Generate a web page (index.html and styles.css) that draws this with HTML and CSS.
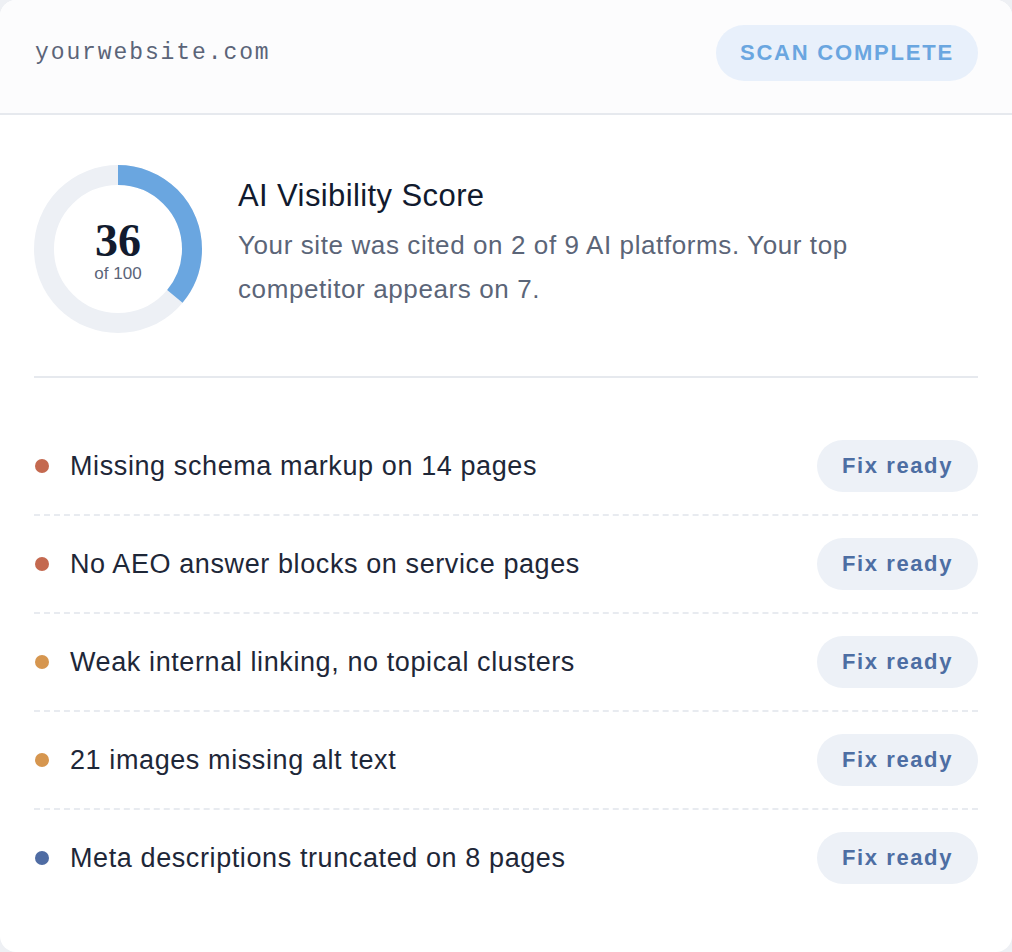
FILE: index.html
```html
<!DOCTYPE html>
<html lang="en">
<head>
  <meta charset="UTF-8">
  <meta name="viewport" content="width=device-width, initial-scale=1.0">
  <title>AI Visibility Scan</title>
  <link rel="stylesheet" href="styles.css">
</head>
<body>
<div class="card">
  <div class="card-header">
    <span class="domain">yourwebsite.com</span>
    <span class="status">Scan complete</span>
  </div>

  <div class="card-body">
    <div class="score">
      <div class="donut">
        <svg width="168" height="168" viewBox="0 0 168 168">
          <circle cx="84" cy="84" r="74" fill="none" stroke="#edf0f5" stroke-width="20"/>
          <circle cx="84" cy="84" r="74" fill="none" stroke="#6aa6e0" stroke-width="20"
            stroke-dasharray="167.4 464.96" transform="rotate(-90 84 84)"/>
        </svg>
        <div class="donut-label">
          <span class="donut-value">36</span>
          <span class="donut-total">of 100</span>
        </div>
      </div>
      <div class="score-text">
        <h2>AI Visibility Score</h2>
        <p>Your site was cited on 2 of 9 AI platforms. Your top competitor appears on 7.</p>
      </div>
    </div>

    <ul class="issues">
      <li class="issue">
        <span class="dot high"></span>
        <span class="issue-text">Missing schema markup on 14 pages</span>
        <span class="fix">Fix ready</span>
      </li>
      <li class="issue">
        <span class="dot high"></span>
        <span class="issue-text">No AEO answer blocks on service pages</span>
        <span class="fix">Fix ready</span>
      </li>
      <li class="issue">
        <span class="dot medium"></span>
        <span class="issue-text">Weak internal linking, no topical clusters</span>
        <span class="fix">Fix ready</span>
      </li>
      <li class="issue">
        <span class="dot medium"></span>
        <span class="issue-text">21 images missing alt text</span>
        <span class="fix">Fix ready</span>
      </li>
      <li class="issue">
        <span class="dot low"></span>
        <span class="issue-text">Meta descriptions truncated on 8 pages</span>
        <span class="fix">Fix ready</span>
      </li>
    </ul>
  </div>
</div>
</body>
</html>
```

FILE: styles.css
```css
* {
  box-sizing: border-box;
}

body {
  margin: 0;
  font-family: 'Liberation Sans', Arial, sans-serif;
  background-color: #eef0f4;
  color: #1e2738;
}

.card {
  height: 952px;
  background-color: white;
  border-radius: 16px;
  overflow: hidden;
}

.card-header {
  display: flex;
  align-items: center;
  justify-content: space-between;
  height: 115px;
  padding: 0 34px 7px 35px;
  background-color: #fcfcfd;
  border-bottom: 2px solid #e6e9ee;
}

.domain {
  font-family: 'Liberation Mono', monospace;
  font-size: 23px;
  letter-spacing: 1.9px;
  color: #5b6478;
}

.status {
  padding: 0 24px;
  height: 56px;
  line-height: 56px;
  border-radius: 999px;
  background-color: #e8f0fb;
  color: #6aa6e0;
  font-size: 22px;
  font-weight: 700;
  letter-spacing: 1.8px;
  text-transform: uppercase;
}

.card-body {
  padding: 0 34px;
}

.score {
  display: flex;
  align-items: flex-start;
  gap: 36px;
  padding: 50px 0 43px;
  border-bottom: 2px solid #e6e9ee;
}

.donut {
  position: relative;
  width: 168px;
  height: 168px;
  flex-shrink: 0;
}

.donut svg {
  display: block;
}

.donut-label {
  position: absolute;
  inset: 0;
  display: flex;
  flex-direction: column;
  align-items: center;
  justify-content: center;
  padding-top: 4px;
}

.donut-value {
  font-family: 'Liberation Serif', 'DejaVu Serif', serif;
  font-size: 46px;
  font-weight: 700;
  line-height: 1;
  color: #121b2e;
}

.donut-total {
  margin-top: 0;
  font-size: 17px;
  color: #5b6478;
}

.score-text {
  margin-top: 13px;
}

.score-text h2 {
  margin: 0 0 9px;
  font-size: 31px;
  line-height: 36px;
  font-weight: 400;
  letter-spacing: 0.4px;
  color: #111a2e;
}

.score-text p {
  max-width: 640px;
  margin: 0;
  font-size: 26px;
  line-height: 44px;
  letter-spacing: 0.6px;
  color: #5b6578;
}

.issues {
  list-style: none;
  margin: 0;
  padding: 40px 0 0;
}

.issue {
  display: flex;
  align-items: center;
  gap: 21px;
  padding: 22px 0;
  border-bottom: 2px dashed #e8ebf0;
}

.issue:last-child {
  border-bottom: none;
}

.dot {
  width: 14px;
  height: 14px;
  margin-left: 1px;
  border-radius: 50%;
  flex-shrink: 0;
}

.dot.high {
  background-color: #c4694f;
}

.dot.medium {
  background-color: #d6964f;
}

.dot.low {
  background-color: #4f6ca3;
}

.issue-text {
  flex: 1;
  font-size: 27px;
  letter-spacing: 0.6px;
  color: #1e2738;
}

.fix {
  padding: 0 25px;
  height: 52px;
  line-height: 52px;
  border-radius: 999px;
  background-color: #edf1f7;
  color: #4d6ea3;
  font-size: 22px;
  font-weight: 700;
  letter-spacing: 1.6px;
}
```
